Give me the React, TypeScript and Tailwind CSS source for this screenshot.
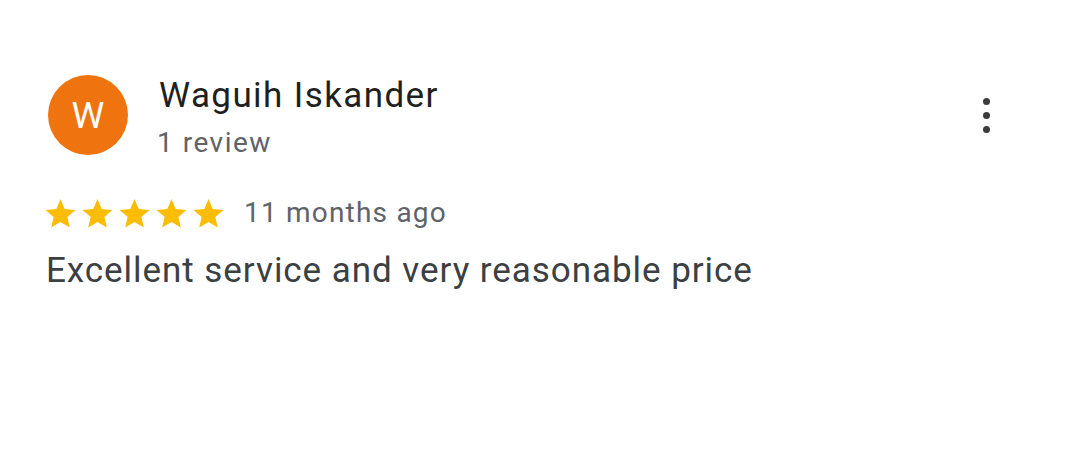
function Star() {
  return (
    <svg viewBox="2 2 20 19.3" className="w-[31px] h-[29px]" fill="#fbbc04">
      <path d="M12 17.27L18.18 21l-1.64-7.03L22 9.24l-7.19-.61L12 2 9.19 8.63 2 9.24l5.46 4.73L5.82 21z" />
    </svg>
  );
}

export default function App() {
  return (
    <div className="w-[1080px] h-[450px] bg-white font-['Roboto',sans-serif]">
      <div className="pl-[48px] pr-[90px] pt-[75px]">
        <div className="flex items-start justify-between">
          <div className="flex items-start gap-[31px]">
            <div className="w-[80px] h-[80px] rounded-full bg-[#ef7410] flex items-center justify-center text-white text-[37px] leading-none">
              W
            </div>
            <div className="flex flex-col mt-[1px]">
              <span className="text-[35px] leading-[40px] text-[#1f1f1f] tracking-[1.4px]">Waguih Iskander</span>
              <span className="mt-[10px] ml-[-2px] text-[28px] leading-[34px] text-[#5f6368] tracking-[1.5px]">1 review</span>
            </div>
          </div>
          <div className="flex flex-col gap-[7px] mt-[23px]">
            <div className="w-[7px] h-[7px] rounded-full bg-[#3c3c3c]" />
            <div className="w-[7px] h-[7px] rounded-full bg-[#3c3c3c]" />
            <div className="w-[7px] h-[7px] rounded-full bg-[#3c3c3c]" />
          </div>
        </div>
        <div className="flex items-center h-[30px] mt-[38px] ml-[-3px]">
          <div className="flex gap-[6px]">
            <Star />
            <Star />
            <Star />
            <Star />
            <Star />
          </div>
          <span className="ml-[20px] text-[28px] leading-[30px] text-[#5f6368] tracking-[1.2px]">11 months ago</span>
        </div>
        <p className="mt-[23px] ml-[-2px] text-[35px] leading-[40px] text-[#3c4043] tracking-[0.95px]">
          Excellent service and very reasonable price
        </p>
      </div>
    </div>
  );
}
